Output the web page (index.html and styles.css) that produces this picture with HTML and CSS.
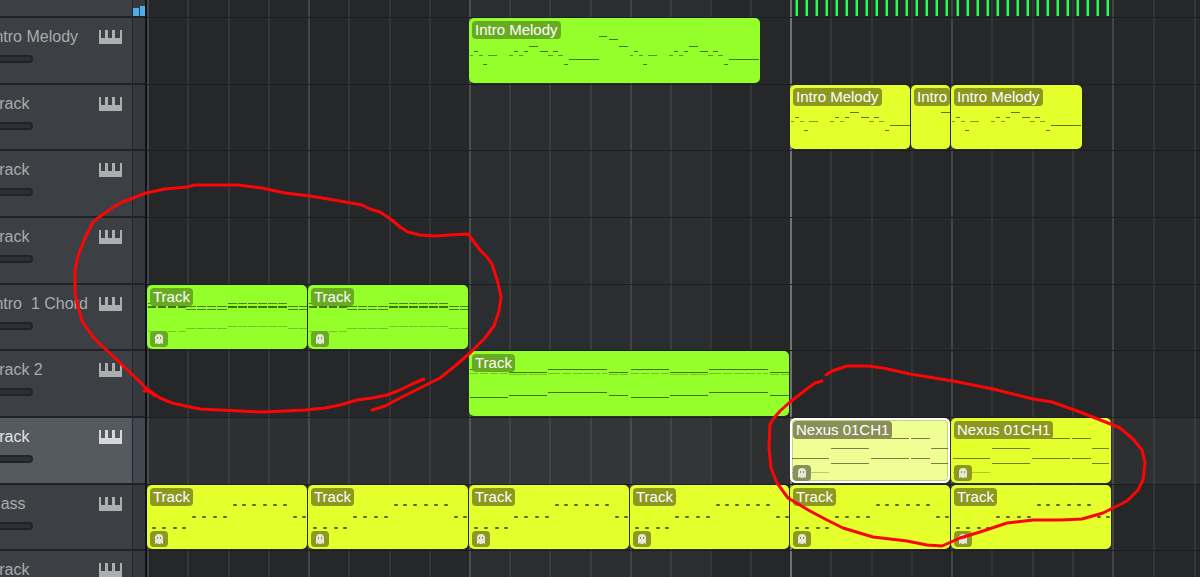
FILE: index.html
```html
<!DOCTYPE html>
<html lang="en">
  <head>
    <meta charset="UTF-8" />
    <meta name="viewport" content="width=device-width, initial-scale=1.0" />
    <title>Arrangement</title>
    <link rel="stylesheet" href="styles.css" />
  </head>
  <body>
    <!-- Shared icons and note patterns -->
    <svg class="defs" aria-hidden="true">
      <symbol id="icon-keys" viewBox="0 0 23 14">
        <path d="M0 0h2v8h4V0h3v8h4V0h3v8h5V0h2v14H0z" />
      </symbol>
      <symbol id="icon-ghost" viewBox="0 0 18 16">
        <path
          fill-rule="evenodd"
          d="M5 13V7q0-4 4-4t4 4v6l-2-1-1 1H8l-1-1zM7 6v2h1V6zm3 0v2h1V6z"
        />
      </symbol>
      <g id="notes-phrase">
        <path class="soft" d="M1 37h3M10 37h4M19 37h9M40 37h4M50 37h4M79 37h5M89 37h5" />
        <path d="M5 33h4M14 46h4M45 33h4M55 33h4M60 28h9M71 33h8M84 33h5M95 46h4M100 41h30" />
      </g>
      <g id="notes-chord">
        <path class="thick" d="M1 22h8M11 22h8M21 22h8M31 22h8M81 22h9M91 22h9M101 22h9M111 22h9M121 22h9M131 22h9" />
        <path class="mid" d="M39 21h10M50 21h9M60 21h9M70 21h10M39 24h10M50 24h9M60 24h9M70 24h10M141 21h10M152 21h9M141 24h10M152 24h9" />
        <path class="mid" d="M1 18h8M81 18h9M91 18h9M101 18h9M111 18h9M121 18h9M131 18h9" />
        <path class="faint" d="M1 46h8M11 46h8M21 46h8M31 46h8M39 43h10M50 43h9M60 43h9M70 43h10M81 41h9M91 41h9M101 41h9M111 41h9M121 41h9M131 41h9M141 43h10M152 43h9" />
      </g>
      <g id="notes-long">
        <path d="M1 18h38M40 21h38M79 18h59M140 21h19" />
        <path d="M1 46h38M40 44h38M79 41h59M140 44h19" />
        <path class="faint" d="M1 22h8M11 22h8M21 22h8M31 22h8M40 23h18M60 23h18M79 22h12M93 22h9M104 22h10M115 22h10M127 22h4M133 22h5M140 23h9M151 23h8" />
      </g>
      <g id="notes-nexus">
        <path class="mid" d="M81 20h38M121 20h19M41 30h38M141 30h17M2 40h37M81 40h38M121 40h19M41 45h38M141 45h17" />
        <path class="faint" d="M2 54h37" />
      </g>
      <g id="notes-bass">
        <path class="dots" d="M6 43h2M16 43h2M27 43h2M36 43h2M46 32h2M56 32h2M67 32h2M77 32h2M87 20h2M96 20h2M106 20h2M117 20h2M127 20h2M137 20h2M147 32h2M156 32h2" />
      </g>
    </svg>

    <main class="arranger">
      <div class="beats" aria-hidden="true">
        <i></i><i></i><i></i><i></i><i></i><i></i><i></i><i></i>
        <i class="lit edge"></i><i class="lit"></i><i class="lit"></i><i class="lit"></i><i class="lit"></i><i class="lit"></i><i></i><i></i>
        <i class="playhead"></i><i></i><i></i><i></i><i></i><i></i><i></i><i></i>
        <i></i><i></i><i></i>
      </div>

      <section class="track track-top">
        <header class="track-head">
          <div class="track-info"></div>
          <div class="meter"><span class="level"></span><span class="level high"></span></div>
        </header>
        <div class="lane">
          <div class="hits at-17 len-4"></div>
          <div class="hits at-21 len-4"></div>
        </div>
      </section>

      <section class="track">
        <header class="track-head">
          <div class="track-info">
            <span class="track-name">Intro Melody</span>
            <svg class="keys"><use href="#icon-keys" /></svg>
            <input class="fader" type="range" aria-label="Intro Melody volume" />
          </div>
          <div class="meter"></div>
        </header>
        <div class="lane">
          <article class="clip green at-9 len-8 short">
            <svg class="notes">
              <use href="#notes-phrase" />
              <path d="M130 18h8M140 21h9M150 28h9" />
              <use href="#notes-phrase" x="160" />
            </svg>
            <span class="clip-name">Intro Melody</span>
          </article>
        </div>
      </section>

      <section class="track">
        <header class="track-head">
          <div class="track-info">
            <span class="track-name">Track</span>
            <svg class="keys"><use href="#icon-keys" /></svg>
            <input class="fader" type="range" aria-label="Track volume" />
          </div>
          <div class="meter"></div>
        </header>
        <div class="lane">
          <article class="clip yellow at-17 len-3">
            <svg class="notes"><use href="#notes-phrase" y="-1" /></svg>
            <span class="clip-name">Intro Melody</span>
          </article>
          <article class="clip yellow at-20 len-1">
            <svg class="notes"><path d="M30 27h10" /></svg>
            <span class="clip-name">Intro</span>
          </article>
          <article class="clip yellow at-21 len-4 short">
            <svg class="notes"><use href="#notes-phrase" y="-1" /></svg>
            <span class="clip-name">Intro Melody</span>
          </article>
        </div>
      </section>

      <section class="track">
        <header class="track-head">
          <div class="track-info">
            <span class="track-name">Track</span>
            <svg class="keys"><use href="#icon-keys" /></svg>
            <input class="fader" type="range" aria-label="Track volume" />
          </div>
          <div class="meter"></div>
        </header>
        <div class="lane"></div>
      </section>

      <section class="track">
        <header class="track-head">
          <div class="track-info">
            <span class="track-name">Track</span>
            <svg class="keys"><use href="#icon-keys" /></svg>
            <input class="fader" type="range" aria-label="Track volume" />
          </div>
          <div class="meter"></div>
        </header>
        <div class="lane"></div>
      </section>

      <section class="track">
        <header class="track-head">
          <div class="track-info">
            <span class="track-name">Intro  1 Chord</span>
            <svg class="keys"><use href="#icon-keys" /></svg>
            <input class="fader" type="range" aria-label="Intro 1 Chord volume" />
          </div>
          <div class="meter"></div>
        </header>
        <div class="lane">
          <article class="clip green at-1 len-4">
            <svg class="notes"><use href="#notes-chord" /></svg>
            <span class="clip-name">Track</span>
            <svg class="ghost"><use href="#icon-ghost" /></svg>
          </article>
          <article class="clip green at-5 len-4">
            <svg class="notes"><use href="#notes-chord" /></svg>
            <span class="clip-name">Track</span>
            <svg class="ghost"><use href="#icon-ghost" /></svg>
          </article>
        </div>
      </section>

      <section class="track">
        <header class="track-head">
          <div class="track-info">
            <span class="track-name">Track 2</span>
            <svg class="keys"><use href="#icon-keys" /></svg>
            <input class="fader" type="range" aria-label="Track 2 volume" />
          </div>
          <div class="meter"></div>
        </header>
        <div class="lane">
          <article class="clip green at-9 len-8">
            <svg class="notes">
              <use href="#notes-long" />
              <use href="#notes-long" x="161" />
            </svg>
            <span class="clip-name">Track</span>
          </article>
        </div>
      </section>

      <section class="track selected">
        <header class="track-head">
          <div class="track-info">
            <span class="track-name">Track</span>
            <svg class="keys"><use href="#icon-keys" /></svg>
            <input class="fader" type="range" aria-label="Track volume" />
          </div>
          <div class="meter"></div>
        </header>
        <div class="lane">
          <article class="clip yellow picked at-17 len-4">
            <svg class="notes"><use href="#notes-nexus" /></svg>
            <span class="clip-name">Nexus 01CH1</span>
            <svg class="ghost"><use href="#icon-ghost" /></svg>
          </article>
          <article class="clip yellow at-21 len-4">
            <svg class="notes"><use href="#notes-nexus" /></svg>
            <span class="clip-name">Nexus 01CH1</span>
            <svg class="ghost"><use href="#icon-ghost" /></svg>
          </article>
        </div>
      </section>

      <section class="track">
        <header class="track-head">
          <div class="track-info">
            <span class="track-name">Bass</span>
            <svg class="keys"><use href="#icon-keys" /></svg>
            <input class="fader" type="range" aria-label="Bass volume" />
          </div>
          <div class="meter"></div>
        </header>
        <div class="lane">
          <article class="clip yellow at-1 len-4">
            <svg class="notes"><use href="#notes-bass" /></svg>
            <span class="clip-name">Track</span>
            <svg class="ghost"><use href="#icon-ghost" /></svg>
          </article>
          <article class="clip yellow at-5 len-4">
            <svg class="notes"><use href="#notes-bass" /></svg>
            <span class="clip-name">Track</span>
            <svg class="ghost"><use href="#icon-ghost" /></svg>
          </article>
          <article class="clip yellow at-9 len-4">
            <svg class="notes"><use href="#notes-bass" /></svg>
            <span class="clip-name">Track</span>
            <svg class="ghost"><use href="#icon-ghost" /></svg>
          </article>
          <article class="clip yellow at-13 len-4">
            <svg class="notes"><use href="#notes-bass" /></svg>
            <span class="clip-name">Track</span>
            <svg class="ghost"><use href="#icon-ghost" /></svg>
          </article>
          <article class="clip yellow at-17 len-4">
            <svg class="notes"><use href="#notes-bass" /></svg>
            <span class="clip-name">Track</span>
            <svg class="ghost"><use href="#icon-ghost" /></svg>
          </article>
          <article class="clip yellow at-21 len-4">
            <svg class="notes"><use href="#notes-bass" /></svg>
            <span class="clip-name">Track</span>
            <svg class="ghost"><use href="#icon-ghost" /></svg>
          </article>
        </div>
      </section>

      <section class="track">
        <header class="track-head">
          <div class="track-info">
            <span class="track-name">Track</span>
            <svg class="keys"><use href="#icon-keys" /></svg>
            <input class="fader" type="range" aria-label="Track volume" />
          </div>
          <div class="meter"></div>
        </header>
        <div class="lane"></div>
      </section>

      <!-- Pen marks -->
      <svg class="marks" aria-hidden="true">
        <path d="M424 379L412 384 400 390 387 395 372 398 357 400 340 405 325 408 305 410 285 411 262 412 240 411 220 410 200 409 190 407 172 403 160 398 147 389 135 377 121 364 115 358 103 347 93 337 82 321 77 303 75 293 75 270 78 256 85 238 93 222 98 218 112 208 122 202 133 198 146 193 165 189 187 187 195 185 238 185 262 188 285 193 310 196 340 201 362 205 370 209 380 212 392 220 400 227 408 232 420 235 435 236 450 235 468 234 480 250 487 257 492 264 498 283 501 297 499 311 494 326 485 338 470 353 455 366 440 378 420 388 400 398 385 406 372 410" />
        <path d="M144 391L150 391 155 396 147 389" />
        <path d="M822 381L815 383 808 388 790 402 780 411 774 418 770 424 769 448 771 468 777 483 788 498 810 511 827 520 843 528 873 537 907 541 927 545 942 546 960 538 980 532 1007 523 1033 520 1060 520 1082 519 1103 513 1113 508 1127 501 1138 490 1143 480 1145 462 1142 450 1133 439 1120 428 1113 425 1080 412 1052 402 1033 399 993 389 953 381 910 374 883 368 868 366 847 366 832 371 826 375" />
      </svg>
    </main>
  </body>
</html>
```
FILE: styles.css
```css
/* Global */
* {
  box-sizing: border-box;
}
body {
  margin: 0;
  height: 100vh;
  overflow: hidden;
  background: #262729;
  color: #a9abad;
  font-family: "Liberation Sans", Arial, sans-serif;
}
.defs {
  position: absolute;
  width: 0;
  height: 0;
}
.arranger {
  position: relative;
  height: 100vh;
  overflow: hidden;
}

/* Beat grid, shared by the backdrop and the lanes */
.beats,
.lane {
  display: grid;
  grid-template-columns:
    repeat(2, 40px 41px 40px 40px)
    40px 40px 41px repeat(5, 40px)
    repeat(2, 40px 41px 40px 40px)
    41px 41px 1fr;
}
.beats {
  position: absolute;
  top: 0;
  right: 0;
  bottom: 0;
  left: 147px;
}
.beats i {
  border-left: 2px solid #343538;
}
.beats i:nth-child(4n + 1) {
  border-left-color: #424447;
}
.beats .lit {
  background: #2a2e31;
  border-left-color: #393d40;
}
.beats .edge:nth-child(n) {
  border-left-color: #4a4e51;
}
.beats .playhead:nth-child(n) {
  border-left-color: #717274;
}

/* Tracks */
.track {
  position: relative;
  display: grid;
  grid-template-columns: 147px 1fr;
  grid-template-rows: 100%;
  height: 67px;
}
.track:nth-of-type(3n) {
  height: 66px;
}
.track.track-top {
  height: 18px;
}
.track-head {
  display: flex;
  border-right: 2px solid #111213;
  background: #3c3f43;
}
.track-info {
  flex: 1;
  display: grid;
  grid-template-columns: 99px 1fr;
  grid-template-rows: 37px 8px;
  align-items: center;
  overflow: hidden;
  border-right: 1px solid #232629;
  border-bottom: 2px solid #202326;
}
.track-name {
  margin-left: -10px;
  font-size: 16px;
  line-height: 20px;
  white-space: pre;
}
.keys {
  width: 23px;
  height: 14px;
  fill: #adaeaf;
}
.fader {
  appearance: none;
  width: 37px;
  height: 8px;
  margin: 0 0 0 -4px;
  border: 2px solid #212427;
  border-radius: 4px;
  background: #2d3135;
}
.fader::-webkit-slider-thumb {
  appearance: none;
  width: 0;
  height: 0;
}
.meter {
  display: flex;
  align-items: flex-end;
  gap: 1px;
  width: 12px;
  border-bottom: 2px solid #202326;
  background: #35383d;
}
.level {
  flex: 1;
  height: 8px;
  background: #4eaee8;
}
.level.high {
  height: 10px;
}
.lane {
  position: relative;
  grid-template-rows: 100%;
  padding-bottom: 2px;
  background: linear-gradient(#1d1e20, #1d1e20) bottom / 100% 1px no-repeat;
}

.selected .track-info {
  background: #555960;
  color: #e3e4e6;
}
.selected .keys {
  fill: #d7d8da;
}
.selected .meter {
  background: #434850;
}
.selected .lane {
  background-color: rgba(255, 255, 255, 0.04);
}

/* Clips */
.clip {
  position: relative;
  margin-right: 1px;
  overflow: hidden;
  border-radius: 5px;
}
.clip.short {
  margin-right: 30px;
}
.green {
  background: #94ff2b;
}
.yellow {
  background: #e4ff2b;
}
.picked {
  background: #f0ff93;
  border-radius: 6px;
  box-shadow: inset 0 0 0 2px #ffffff, inset 0 0 0 3px #c5cf88;
}
.clip-name {
  position: absolute;
  top: 3px;
  left: 3px;
  padding: 0 3px;
  border-radius: 4px;
  color: #ffffff;
  font-size: 15px;
  line-height: 18px;
  white-space: nowrap;
}
.green .clip-name,
.green .ghost {
  background: #68ab23;
}
.yellow .clip-name,
.yellow .ghost {
  background: #8c981f;
}
.picked .clip-name,
.picked .ghost {
  background: #888f58;
}
.ghost {
  position: absolute;
  bottom: 2px;
  left: 3px;
  width: 18px;
  height: 16px;
  border-radius: 4px;
  fill: #e4e8d8;
}
.notes {
  position: absolute;
  inset: 0;
  width: 100%;
  height: 100%;
}
#notes-phrase path,
#notes-chord path,
#notes-long path,
#notes-nexus path,
.notes path {
  fill: none;
  stroke: rgba(0, 0, 0, 0.55);
  stroke-width: 1px;
  shape-rendering: crispEdges;
}
#notes-phrase .soft {
  stroke: rgba(0, 0, 0, 0.4);
}
#notes-chord .thick {
  stroke-width: 2px;
}
#notes-chord .mid,
#notes-nexus .mid {
  stroke: rgba(0, 0, 0, 0.5);
}
#notes-chord .faint,
#notes-long .faint,
#notes-nexus .faint {
  stroke: rgba(0, 0, 0, 0.22);
}
#notes-bass .dots {
  fill: none;
  stroke: rgba(0, 0, 0, 0.6);
  stroke-width: 2px;
  stroke-linecap: round;
}
.hits {
  background: repeating-linear-gradient(
    90deg,
    transparent 0 5px,
    #1b8f3d 5px 6px,
    #22ff55 6px 8px,
    transparent 8px 10px
  );
}

/* Where a clip starts and how many beats it runs */
.lane > * {
  grid-row: 1;
}
.at-1 {
  grid-column-start: 1;
}
.at-5 {
  grid-column-start: 5;
}
.at-9 {
  grid-column-start: 9;
}
.at-13 {
  grid-column-start: 13;
}
.at-17 {
  grid-column-start: 17;
}
.at-20 {
  grid-column-start: 20;
}
.at-21 {
  grid-column-start: 21;
}
.len-1 {
  grid-column-end: span 1;
}
.len-3 {
  grid-column-end: span 3;
}
.len-4 {
  grid-column-end: span 4;
}
.len-8 {
  grid-column-end: span 8;
}

/* Pen marks over the whole arrangement */
.marks {
  position: absolute;
  top: 0;
  left: 0;
  width: 100%;
  height: 100%;
  fill: none;
  stroke: #fb0505;
  stroke-width: 3px;
  stroke-linecap: round;
  stroke-linejoin: round;
  pointer-events: none;
}
```
